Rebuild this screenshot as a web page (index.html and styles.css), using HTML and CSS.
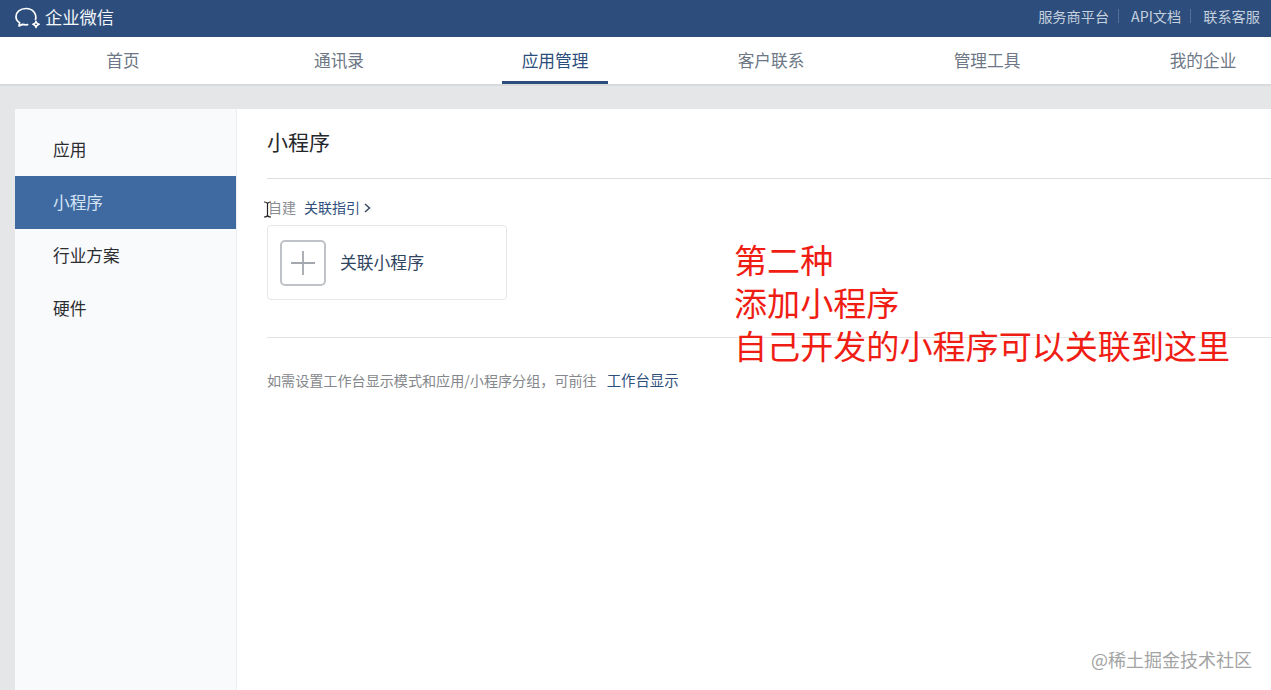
FILE: index.html
```html
<!DOCTYPE html>
<html lang="zh-CN">
<head>
<meta charset="utf-8">
<title>企业微信</title>
<link rel="stylesheet" href="styles.css">
</head>
<body>
<header class="topbar">
  <div class="brand">
    <svg class="logo" viewBox="0 0 28 24" width="28" height="24" fill="none" stroke="#fff" stroke-width="1.7" stroke-linecap="round" stroke-linejoin="round">
      <path d="M21.5 14.5C23 9 19 3.500 12 3.500C6 3.500 2 7 2 11.500C2 14.300 3.400 16.400 5.600 17.800L5 21L8.600 19.400C10 19.800 11.800 20 13.600 19.700"/>
      <path d="M22 16.200C22.300 18 23.200 19 25.200 19.300C23.200 19.700 22.300 20.600 22 22.600C21.700 20.600 20.800 19.700 18.800 19.300C20.800 19 21.700 18 22 16.200Z" stroke-width="1.4"/>
    </svg>
    <span class="brand-name">企业微信</span>
  </div>
  <nav class="toplinks">
    <a>服务商平台</a><i class="sep"></i><a>API文档</a><i class="sep"></i><a>联系客服</a>
  </nav>
</header>
<nav class="mainnav">
  <a class="navitem">首页</a>
  <a class="navitem">通讯录</a>
  <a class="navitem active"><span>应用管理</span></a>
  <a class="navitem">客户联系</a>
  <a class="navitem">管理工具</a>
  <a class="navitem">我的企业</a>
</nav>
<div class="stage">
  <div class="panel">
    <aside class="sidebar">
      <a class="sideitem">应用</a>
      <a class="sideitem current">小程序</a>
      <a class="sideitem">行业方案</a>
      <a class="sideitem">硬件</a>
    </aside>
    <main class="content">
      <h1 class="title">小程序</h1>
      <div class="section">
        <div class="subhead"><span class="muted">自建</span><a class="guide">关联指引<svg class="chev" viewBox="0 0 7 10" width="7" height="10" fill="none" stroke="#3a4a60" stroke-width="1.5"><path d="M1 1L5.500 5L1 9"/></svg></a></div>
        <div class="card">
          <div class="plus"><svg viewBox="0 0 24 24" width="24" height="24" fill="none" stroke="#a3a8ae" stroke-width="1.8"><path d="M12 0V24M0 12H24"/></svg></div>
          <span class="card-label">关联小程序</span>
        </div>
      </div>
      <p class="note">如需设置工作台显示模式和应用/小程序分组，可前往<a class="note-link">工作台显示</a></p>
    </main>
  </div>
</div>
<svg class="ibeam" viewBox="0 0 9 17" width="9" height="17" fill="none" stroke="#222" stroke-width="1.2"><path d="M1 1C3 1 4.500 1.500 4.500 3V14C4.500 15.500 3 16 1 16M8 1C6 1 4.500 1.500 4.500 3M4.500 14C4.500 15.500 6 16 8 16"/></svg>
<div class="annotation">第二种<br>添加小程序<br>自己开发的小程序可以关联到这里</div>
<div class="watermark">@稀土掘金技术社区</div>
</body>
</html>
```

FILE: styles.css
```css
* { box-sizing: border-box; }
html, body { height: 100%; }
body {
  margin: 0;
  width: 1271px;
  height: 690px;
  overflow: hidden;
  position: relative;
  display: flex;
  flex-direction: column;
  background: #e5e6e7;
  font-family: "Noto Sans CJK SC", "Liberation Sans", sans-serif;
  color: #2f3237;
}
.topbar {
  height: 37px;
  flex: none;
  background: #2d4e7c;
  display: flex;
  align-items: center;
  justify-content: space-between;
  padding: 0 11px 0 14px;
}
.brand { display: flex; align-items: center; gap: 3px; margin-top: -4px; }
.logo { display: block; }
.brand-name { color: #f3f6fa; font-size: 17.300px; line-height: 24px; }
.toplinks { display: flex; align-items: center; font-size: 14.200px; color: #c5d0de; margin-top: -5px; }
.sep { width: 1px; height: 14px; background: #55719a; margin: 0 12px 0 9px; }
.mainnav {
  height: 49px;
  flex: none;
  background: #fff;
  border-bottom: 2px solid #d9dadb;
  padding-left: 15px;
  display: flex;
  overflow: hidden;
}
.navitem {
  flex: 0 0 216px;
  text-align: center;
  font-size: 16.700px;
  line-height: 47px;
  color: #6d7785;
}
.navitem.active { color: #2d4e7c; }
.navitem.active span {
  display: block;
  width: 106px;
  height: 47px;
  margin: 0 auto;
  border-bottom: 3px solid #2d4e7c;
}
.stage { flex: 1; padding: 23px 0 0 15px; min-height: 0; }
.panel {
  height: 100%;
  background: #fff;
  display: flex;
  border-radius: 3px 0 0 0;
}
.sidebar {
  flex: 0 0 222px;
  background: #f9fafb;
  border-right: 1px solid #eceef0;
  padding-top: 14px;
}
.sideitem {
  display: block;
  height: 53px;
  padding-left: 38px;
  font-size: 16.700px;
  line-height: 52px;
  color: #2b2d31;
}
.sideitem.current { background: #3f6aa1; color: #d5e4f5; }
.content { flex: 1; padding: 0 0 0 30px; min-width: 0; }
.title {
  margin: 0;
  height: 70px;
  font-size: 21px;
  font-weight: 400;
  line-height: 64px;
  color: #24272b;
  border-bottom: 1px solid #dcdddf;
}
.section { height: 159px; border-bottom: 1px solid #e2e3e5; padding-top: 20px; }
.subhead { font-size: 14px; line-height: 17px; display: flex; gap: 8px; margin-left: 1px; }
.muted { color: #8a8d91; }
.guide { color: #2f4f7c; }
.chev { margin-left: 4px; }
.card {
  margin-top: 9px;
  width: 240px;
  height: 75px;
  border: 1px solid #e6e7e9;
  border-radius: 4px;
  display: flex;
  align-items: center;
  padding-left: 12px;
  gap: 14px;
}
.plus {
  width: 46px;
  height: 46px;
  border: 2px solid #bfc2c6;
  border-radius: 5px;
  display: flex;
  align-items: center;
  justify-content: center;
}
.plus svg { display: block; }
.card-label { font-size: 16.800px; line-height: 24px; margin-top: -2px; color: #30445f; }
.note { margin: 32px 0 0; font-size: 14.100px; line-height: 20px; color: #84878b; }
.note-link { color: #2f4f7c; margin-left: 10px; font-size: 14.400px; }
.ibeam { position: absolute; left: 263px; top: 201px; }
.annotation {
  position: absolute;
  left: 734px;
  top: 238px;
  font-size: 33.100px;
  line-height: 43px;
  color: #f01d14;
  white-space: nowrap;
}
.watermark {
  position: absolute;
  right: 19px;
  top: 647px;
  font-size: 18px;
  line-height: 24px;
  color: #a3a3a3;
}
```
